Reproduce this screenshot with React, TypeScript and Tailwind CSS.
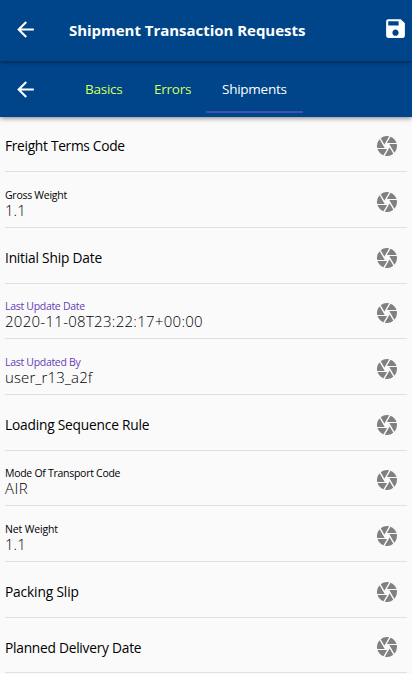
import { MdArrowBack, MdCamera, MdSave } from "react-icons/md";

type Field = {
  label: string;
  value?: string;
  height: string;
  labelClass: string;
  valueClass?: string;
};

const fields: Field[] = [
  { label: "Freight Terms Code", height: "h-[55px]", labelClass: "pt-[19px] tracking-[-0.3px]" },
  { label: "Gross Weight", value: "1.1", height: "h-[56px] pt-px", labelClass: "tracking-[-0.27px] text-black", valueClass: "tracking-normal" },
  { label: "Initial Ship Date", height: "h-[56px] pt-px", labelClass: "pt-[19px] tracking-[-0.21px]" },
  { label: "Last Update Date", value: "2020-11-08T23:22:17+00:00", height: "h-[55px]", labelClass: "tracking-[-0.3px] text-[#673ab7]", valueClass: "tracking-[0.28px]" },
  { label: "Last Updated By", value: "user_r13_a2f", height: "h-[56px] pt-px", labelClass: "tracking-[-0.3px] text-[#673ab7]", valueClass: "tracking-[0.1px]" },
  { label: "Loading Sequence Rule", height: "h-[56px] pt-px", labelClass: "pt-[19px] tracking-[-0.21px]" },
  { label: "Mode Of Transport Code", value: "AIR", height: "h-[55px]", labelClass: "tracking-[-0.28px] text-black", valueClass: "tracking-[0.5px]" },
  { label: "Net Weight", value: "1.1", height: "h-[56px] pt-px", labelClass: "tracking-[-0.15px] text-black", valueClass: "tracking-normal" },
  { label: "Packing Slip", height: "h-[56px] pt-px", labelClass: "pt-[19px] tracking-[-0.15px]" },
  { label: "Planned Delivery Date", height: "h-[55px]", labelClass: "pt-[20px] tracking-[-0.25px]" },
];

function FieldRow({ field }: { field: Field }) {
  return (
    <li className={`flex border-b border-[#e0e0e0] ${field.height}`}>
      <div className="min-w-0 flex-1 whitespace-nowrap">
        {field.value ? (
          <div className="pt-[15px]">
            <div className={`text-[10.5px] leading-[15px] ${field.labelClass}`}>{field.label}</div>
            <div className={`text-[15px] leading-[15px] font-[350] text-black ${field.valueClass}`}>{field.value}</div>
          </div>
        ) : (
          <div className={`text-[13.75px] leading-5 font-[370] text-black ${field.labelClass}`}>{field.label}</div>
        )}
      </div>
      <MdCamera className="mt-[17px] mr-[8px] size-6 shrink-0 text-[#808080]" />
    </li>
  );
}

export default function App() {
  return (
    <div className="flex h-[674px] w-[412px] flex-col overflow-hidden bg-[#fafafa] font-['Open_Sans','Noto_Sans',sans-serif]">
      <header className="relative z-20 flex h-[61px] shrink-0 items-center bg-[#004589] pr-1 pl-[13px] text-white shadow-[0_1px_4px_rgba(0,0,0,0.5)]">
        <MdArrowBack className="-mt-[3px] size-[25px]" />
        <h1 className="-mt-[2px] ml-[31px] flex-1 whitespace-nowrap text-[15px] leading-5 font-bold tracking-[-0.03px]">Shipment Transaction Requests</h1>
        <MdSave className="-mt-[4px] size-[25px]" />
      </header>
      <nav className="relative z-10 flex h-14 shrink-0 bg-[#004589] pl-[13px] text-white shadow-[0_1px_5px_rgba(0,0,0,0.5)]">
        <MdArrowBack className="mt-[16px] size-[25px]" />
        <div className="ml-[31px] flex h-[52px] pt-[8px] text-[13.5px] leading-[41px] tracking-[-0.25px] whitespace-nowrap">
          <span className="w-[69px] pl-4 text-[#d4ff59]">Basics</span>
          <span className="w-[68px] pl-4 text-[#d4ff59]">Errors</span>
          <span className="w-[97px] border-b-2 border-[#3f51b5] pl-4">Shipments</span>
        </div>
      </nav>
      <ul className="pr-[5px] pl-[5px]">
        {fields.map((field) => (
          <FieldRow key={field.label} field={field} />
        ))}
      </ul>
    </div>
  );
}
